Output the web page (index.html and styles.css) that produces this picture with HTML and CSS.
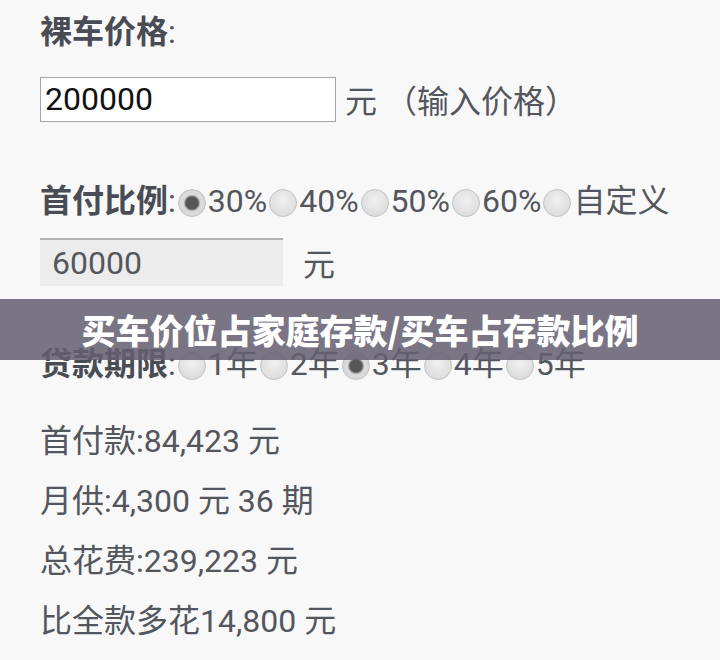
FILE: index.html
```html
<!DOCTYPE html>
<html lang="zh-CN">
<head>
  <meta charset="UTF-8">
  <meta name="viewport" content="width=device-width, initial-scale=1.0">
  <title>买车价位计算</title>
  <link rel="stylesheet" href="styles.css">
</head>
<body>
  <div class="calc">
    <div class="label-row"><b>裸车价格</b>:</div>
    <div class="input-row price-row">
      <input type="text" class="price" value="200000">
      <span class="unit">元 （输入价格）</span>
    </div>

    <div class="label-row radio-row">
      <b>首付比例</b>:
      <label><input type="radio" name="ratio" checked>30%</label>
      <label><input type="radio" name="ratio">40%</label>
      <label><input type="radio" name="ratio">50%</label>
      <label><input type="radio" name="ratio">60%</label>
      <label><input type="radio" name="ratio">自定义</label>
    </div>
    <div class="input-row down-row">
      <input type="text" class="down" value="60000" readonly>
      <span class="unit">元</span>
    </div>

    <div class="label-row radio-row years">
      <b>贷款期限</b>:
      <label><input type="radio" name="years">1年</label>
      <label><input type="radio" name="years">2年</label>
      <label><input type="radio" name="years" checked>3年</label>
      <label><input type="radio" name="years">4年</label>
      <label><input type="radio" name="years">5年</label>
    </div>

    <div class="result">
      <div>首付款:84,423 元</div>
      <div>月供:4,300 元 36 期</div>
      <div>总花费:239,223 元</div>
      <div>比全款多花14,800 元</div>
    </div>
  </div>

  <div class="banner">买车价位占家庭存款/买车占存款比例</div>
</body>
</html>
```

FILE: styles.css
```css
body {
  margin: 0;
  position: relative;
  background: #f8f8f8;
  color: #53565c;
  font-family: Roboto, "Noto Sans CJK SC", sans-serif;
  font-size: 32px;
  min-height: 660px;
}
.calc {
  padding: 12px 0 0 40px;
}
.label-row {
  line-height: 40px;
  height: 40px;
  color: #4e5058;
  white-space: nowrap;
}
.label-row b {
  font-weight: 700;
  color: #4a4c55;
}
.radio-row {
  display: flex;
  align-items: center;
  margin-top: 59px;
}
.radio-row label {
  display: flex;
  align-items: center;
  color: #53565c;
}
.radio-row input {
  appearance: none;
  -webkit-appearance: none;
  width: 28px;
  height: 28px;
  margin: 3px 2px 0 2px;
  border: 1px solid #c2c2c2;
  border-radius: 50%;
  background: radial-gradient(circle at 50% 40%, #f0f0f0, #d6d6d6);
  box-sizing: border-box;
}
.radio-row input:checked {
  background: radial-gradient(circle, #575757 0 6px, #8e8e8e 7px, #dcdcdc 8.5px, #d4d4d4 100%);
}
.years {
  margin-top: 58px;
}
.input-row {
  display: flex;
  align-items: center;
}
.input-row input {
  font: inherit;
  box-sizing: border-box;
  outline: none;
}
.price-row {
  margin-top: 24px;
}
.price {
  width: 296px;
  height: 45px;
  padding: 0 4px;
  border: 1px solid #a5a5a5;
  background: #fff;
  color: #111;
}
.price-row .unit {
  margin-left: 9px;
}
.down-row {
  margin-top: 17px;
}
.down {
  width: 243px;
  height: 48px;
  padding: 0 12px;
  border: none;
  border-top: 2px solid #b3b3b3;
  background: #ececec;
  color: #55575c;
}
.down-row .unit {
  margin-left: 20px;
}
.result {
  margin-top: 27px;
  line-height: 60px;
}
.banner {
  position: absolute;
  top: 299px;
  left: 0;
  right: 0;
  height: 61px;
  line-height: 61px;
  background: rgba(100, 95, 113, 0.86);
  color: #fff;
  font-family: "Noto Sans CJK SC", sans-serif;
  font-weight: 900;
  font-size: 34px;
  text-align: center;
  white-space: nowrap;
}
```
